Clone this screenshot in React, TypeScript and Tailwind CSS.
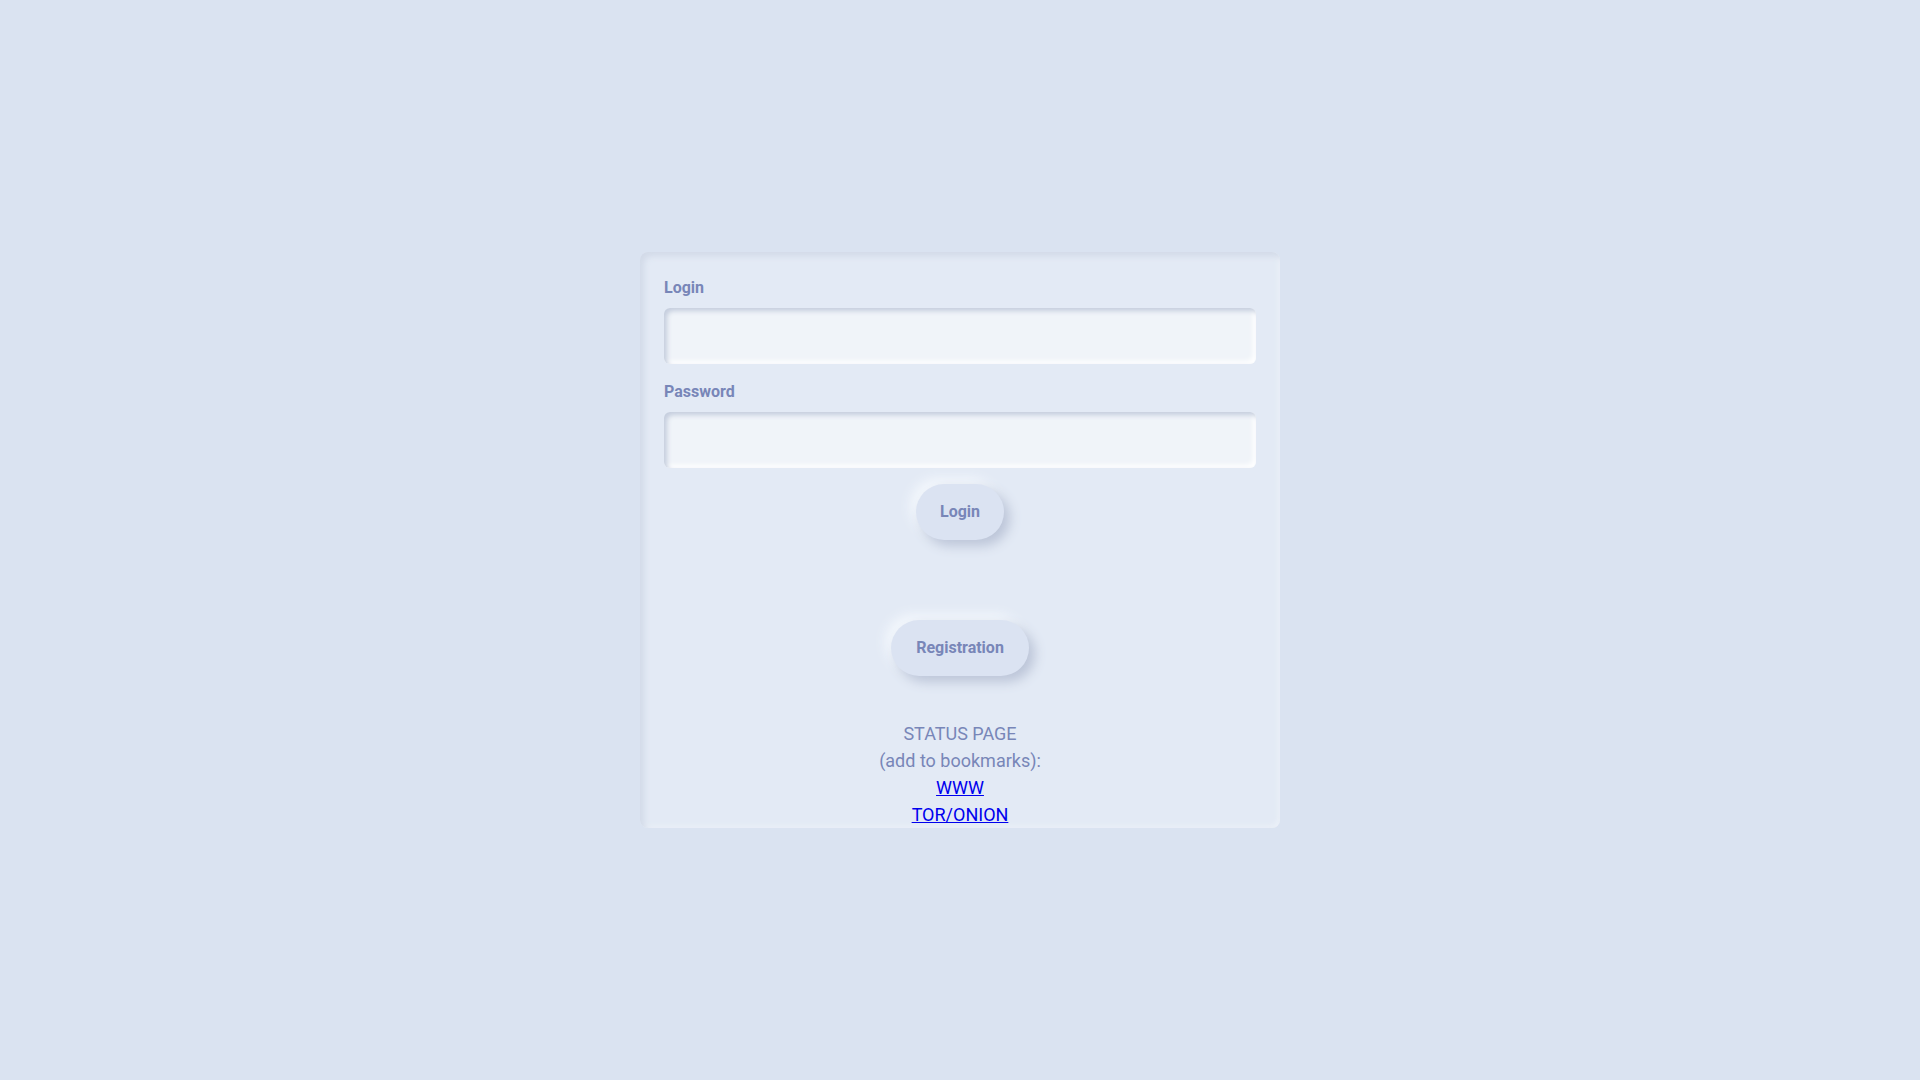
import React from "react";

const font = { fontFamily: "Roboto, 'Noto Sans', sans-serif" };

function Field({ label, type }: { label: string; type: string }) {
  return (
    <div className="flex flex-col gap-2">
      <label className="text-[16px] leading-6 font-bold text-[#7886b8]">{label}</label>
      <input
        type={type}
        className="h-[56px] w-full rounded-md bg-[#f0f4f9] px-4 outline-none shadow-[inset_3px_3px_5px_#c4cddd,inset_-3px_-3px_5px_#ffffff]"
      />
    </div>
  );
}

function SoftButton({ children, width }: { children: React.ReactNode; width: string }) {
  return (
    <button
      className={`${width} h-[56px] rounded-full bg-[#dbe3f2] text-[16px] font-bold text-[#7886b8] shadow-[6px_6px_12px_#bcc5d8,-6px_-6px_12px_#f3f7fc]`}
    >
      {children}
    </button>
  );
}

export default function App() {
  return (
    <div style={font} className="min-h-screen w-full bg-[#dae3f1] flex items-center justify-center">
      <div className="w-[640px] h-[576px] rounded-lg bg-[#e3eaf5] px-6 pt-6 flex flex-col shadow-[inset_4px_4px_6px_#d2dae8,inset_-2px_-2px_4px_#ecf1f8]">
        <div className="flex flex-col gap-4">
          <Field label="Login" type="text" />
          <Field label="Password" type="password" />
        </div>
        <div className="flex justify-center mt-4">
          <SoftButton width="w-[88px]">Login</SoftButton>
        </div>
        <div className="flex justify-center mt-20">
          <SoftButton width="w-[138px]">Registration</SoftButton>
        </div>
        <div className="mt-11 flex flex-col items-center text-[18px] leading-[27px] text-[#7886b8]">
          <span>STATUS PAGE</span>
          <span>(add to bookmarks):</span>
          <a href="#" className="text-[#0000ee] underline">WWW</a>
          <a href="#" className="text-[#0000ee] underline">TOR/ONION</a>
        </div>
      </div>
    </div>
  );
}
